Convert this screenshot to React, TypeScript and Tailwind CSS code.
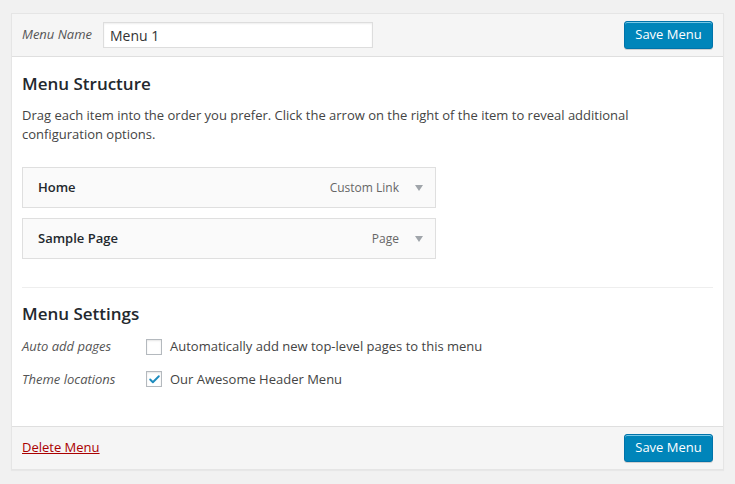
import { Check } from "lucide-react";

const items = [
  { title: "Home", type: "Custom Link" },
  { title: "Sample Page", type: "Page" },
];

function SaveButton() {
  return (
    <button className="h-[28px] w-[89px] rounded-[3px] border border-[#0073aa] bg-[#0085ba] text-[13px] text-white shadow-[inset_0_1px_0_#78c8e6,0_1px_0_rgba(0,0,0,0.15)]">
      Save Menu
    </button>
  );
}

export default function App() {
  return (
    <div
      className="h-[484px] w-[735px] bg-[#f1f1f1] pl-[11px] pr-[11px] pt-[13px] text-[13px] text-[#444]"
      style={{ fontFamily: '"Open Sans", "Liberation Sans", sans-serif' }}
    >
      <div className="border border-[#e5e5e5] bg-white shadow-[0_1px_1px_rgba(0,0,0,0.04)]">
        <div className="flex h-[43px] items-center justify-between border-b border-[#dfdfdf] bg-[#f5f5f5] pl-[10px] pr-[10px]">
          <div className="flex items-center">
            <span className="w-[81px] italic text-[#555]">Menu Name</span>
            <div className="flex h-[26px] w-[270px] items-center border border-[#ddd] bg-white pl-[6px] text-[14px] text-[#333] shadow-[inset_0_1px_2px_rgba(0,0,0,0.07)]">
              Menu 1
            </div>
          </div>
          <SaveButton />
        </div>

        <div className="px-[10px] pb-[37px]">
          <h3 className="pt-[15px] text-[17px] font-semibold leading-[24px] text-[#23282d]">Menu Structure</h3>
          <p className="mt-[10px] max-w-[640px] text-[13px] leading-[19px] text-[#444]">
            Drag each item into the order you prefer. Click the arrow on the right of the item to reveal additional
            configuration options.
          </p>
          <div className="mt-[23px] flex flex-col gap-[10px]">
            {items.map((it) => (
              <div
                key={it.title}
                className="flex h-[41px] w-[414px] items-center justify-between border border-[#dfdfdf] bg-[#fafafa] pl-[15px] pr-[12px]"
              >
                <span className="font-semibold text-[#23282d]">{it.title}</span>
                <div className="flex items-center gap-[16px]">
                  <span className="text-[12px] text-[#666]">{it.type}</span>
                  <svg width="8" height="6" viewBox="0 0 8 6">
                    <path d="M0 0h8L4 6z" fill="#a0a5aa" />
                  </svg>
                </div>
              </div>
            ))}
          </div>
          <div className="mt-[28px] border-t border-[#eee]" />
          <h3 className="pt-[14px] text-[17px] font-semibold leading-[24px] text-[#23282d]">Menu Settings</h3>
          <div className="mt-[11px] flex flex-col gap-[13px]">
            <div className="flex items-center">
              <span className="w-[124px] italic text-[#555]">Auto add pages</span>
              <span className="mr-[8px] flex h-[16px] w-[16px] items-center justify-center border border-[#b4b9be] bg-white shadow-[inset_0_1px_2px_rgba(0,0,0,0.1)]" />
              <span>Automatically add new top-level pages to this menu</span>
            </div>
            <div className="flex items-center">
              <span className="w-[124px] italic text-[#555]">Theme locations</span>
              <span className="mr-[8px] flex h-[16px] w-[16px] items-center justify-center border border-[#b4b9be] bg-white shadow-[inset_0_1px_2px_rgba(0,0,0,0.1)]">
                <Check size={13} strokeWidth={3.5} color="#1e8cbe" />
              </span>
              <span>Our Awesome Header Menu</span>
            </div>
          </div>
        </div>

        <div className="flex h-[43px] items-center justify-between border-t border-[#dfdfdf] bg-[#f5f5f5] pl-[10px] pr-[10px]">
          <a className="text-[13px] text-[#a00] underline">Delete Menu</a>
          <SaveButton />
        </div>
      </div>
    </div>
  );
}
